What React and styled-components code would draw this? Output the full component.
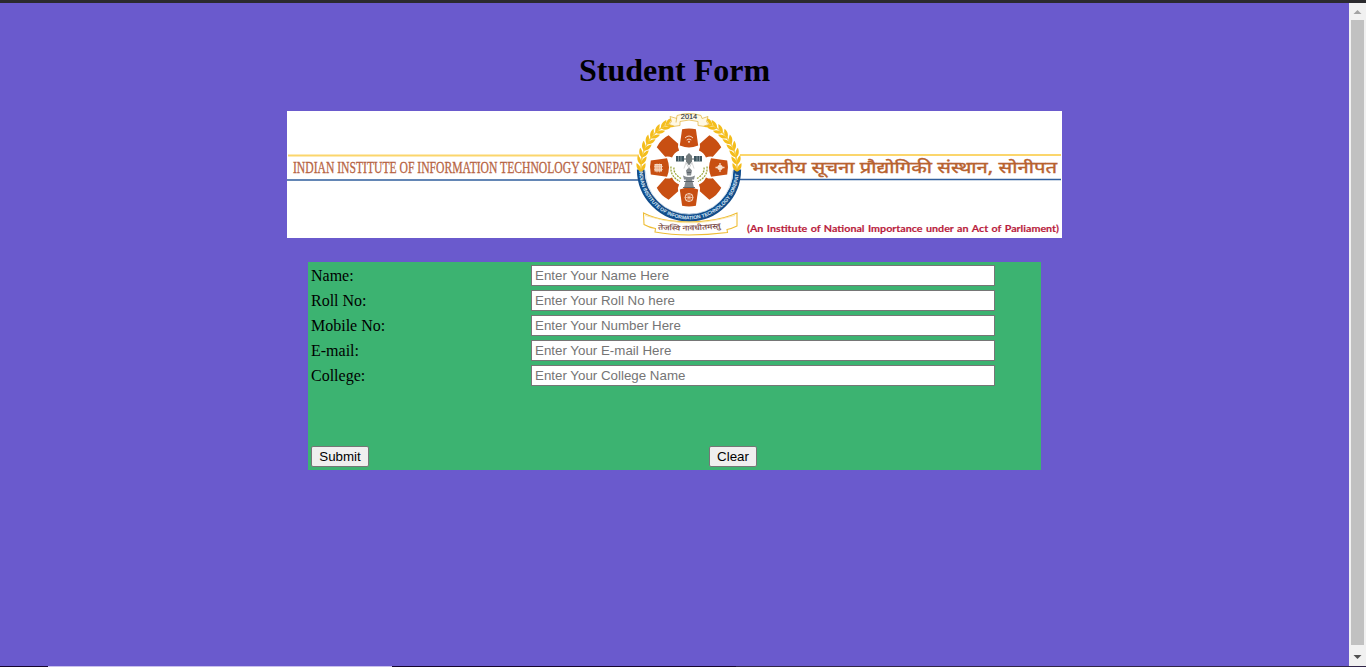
import React from "react";
import styled, { createGlobalStyle } from "styled-components";

const GlobalStyle = createGlobalStyle`
  body { margin: 0; overflow: hidden; }
  * { box-sizing: border-box; }
`;

const Screen = styled.div`
  height: 667px;
  display: flex;
  flex-direction: column;
  background: #6a5acd;
  font-family: "Liberation Serif", "Times New Roman", serif;
  color: #000;
`;

const TopEdge = styled.div`
  height: 3px;
  flex: none;
  background: #2b2a2e;
`;

const Viewport = styled.div`
  flex: 1;
  min-height: 0;
  display: flex;
`;

const Page = styled.main`
  flex: 1;
  display: flex;
  flex-direction: column;
  align-items: center;
  padding-top: 49px;
`;

const Title = styled.h1`
  margin: 0 0 22px;
  font-size: 32px;
  line-height: 37px;
  font-weight: bold;
`;

const Banner = styled.svg`
  display: block;
  width: 775px;
  height: 127px;
  margin-bottom: 24px;
  background: #fff;
`;

const Form = styled.form`
  width: 733px;
  height: 208px;
  padding: 3px;
  background: #3cb371;
`;

const Field = styled.label`
  display: grid;
  grid-template-columns: 220px 464px;
  height: 21px;
  margin-bottom: 4px;
  font-size: 16px;
  line-height: 21px;
`;

const Input = styled.input`
  height: 21px;
  padding: 1px 3px;
  border: 1px solid #767676;
  background: #fff;
  font: 13.333px "Liberation Sans", Arial, sans-serif;
  &::placeholder { color: #757575; }
`;

const Actions = styled.div`
  display: grid;
  grid-template-columns: 398px auto;
  justify-items: start;
  margin-top: 60px;
`;

const Button = styled.button`
  width: ${(p) => p.$width}px;
  height: 21px;
  padding: 0;
  border: 1px solid #767676;
  border-radius: 2px;
  background: #efefef;
  color: #000;
  font: 13.333px "Liberation Sans", Arial, sans-serif;
`;

const Scrollbar = styled.div`
  width: 17px;
  display: flex;
  flex-direction: column;
  align-items: center;
  background: #f1f1f1;
`;

const ScrollArrow = styled.svg`
  width: 17px;
  height: 17px;
  flex: none;
  &:last-child { margin-top: auto; }
`;

const Thumb = styled.div`
  width: 13px;
  height: 625px;
  background: #c1c1c1;
`;

const BottomEdge = styled.div`
  height: 1px;
  flex: none;
  display: grid;
  grid-template-columns: 48px 344px 344px 1fr;
  background: #16062f;
`;

const EdgeSegment = styled.span`
  background: ${(p) => p.$color};
`;

const FIELDS = [
  ["Name:", "Enter Your Name Here"],
  ["Roll No:", "Enter Your Roll No here"],
  ["Mobile No:", "Enter Your Number Here"],
  ["E-mail:", "Enter Your E-mail Here"],
  ["College:", "Enter Your College Name"],
];

const LEAVES = [0, 8.5, 17, 25.5, 34, 42.5, 51, 59.5, 66];

function Laurel({ flip }) {
  return (
    <g transform={flip ? "scale(-1 1)" : undefined} fill="#f4bd1c">
      <path d="M-48 2A48 48 0 0 1-20-44" fill="none" stroke="#f7cf50" strokeWidth="1.6" />
      {LEAVES.map((a) => (
        <g key={a} transform={`rotate(${a}) translate(-48 0)`}>
          <path d="M0 4.2C-4 2.5-5-1.5-4.4-4.6C-1.8-2.8 0-.8 0 4.2Z" />
          <path d="M0 4.2C4 2.5 5-1.5 4.4-4.6C1.8-2.8 0-.8 0 4.2Z" />
        </g>
      ))}
    </g>
  );
}

function Emblem() {
  return (
    <g transform="translate(402 56.5)">
      <circle r="45" fill="#fff" />
      <path d="M-48.3 2A48.3 48.3 0 0 0 48.3 2" fill="none" stroke="#124d8b" strokeWidth="7.6" />
      <path d="M-43.7 3A43.7 43.7 0 0 0 43.7 3" fill="none" stroke="#cadbe9" strokeWidth=".8" />
      <path id="ring" d="M-49.9 2A49.9 49.9 0 0 0 49.9 2" fill="none" />
      <text fill="#d9e9f7" fontFamily="Liberation Sans, sans-serif" fontWeight="bold" fontSize="5.1">
        <textPath href="#ring" startOffset="1" textLength="151" lengthAdjust="spacing">
          INDIAN INSTITUTE OF INFORMATION TECHNOLOGY SONEPAT
        </textPath>
      </text>
      <Laurel />
      <Laurel flip />

      {[0, 45, 90, 135, 180, 225, 270, 315].map((a) => (
        <path
          key={a}
          transform={`rotate(${a})`}
          d={
            a % 90
              ? "M-8.4-37.2Q0-40 8.4-37.2L9.2-24.5Q6-22.5 5-19Q0-21-5-19Q-6-22.5-9.2-24.5Z"
              : "M-6.9-38.2Q0-39.8 6.9-38.2L9.2-22Q4-20 0-20T-9.2-22Z"
          }
          fill="#c84f12"
        />
      ))}

      <g fill="none" stroke="#f6d8c3" strokeWidth="1">
        <path d="M-4-29.5Q0-33.5 4-29.5M-2.3-27.5Q0-29.5 2.3-27.5" />
        <circle cy="-25.7" r=".6" fill="#f6d8c3" />
        <rect x="-34" y="-3" width="6.5" height="6.5" fill="#edb28f" />
        <path d="M-32-4v9M-29.5-4v9M-35-1h9M-35 2h9" strokeWidth=".6" />
        <circle cx="31" r="2.3" fill="#fff" />
        <path d="M31-4.5v9M26.5 0h9" strokeWidth="1.3" />
        <circle cy="30" r="4" />
        <path d="M-3 27L3 33M3 27L-3 33M-4 30h8M0 26v8" strokeWidth=".7" />
      </g>

      <g fill="none" stroke="#9ba63c" strokeWidth="1.3" strokeDasharray="2 1">
        <path d="M-18-1Q-19 9-9 14M-15 0Q-16 6-8 11" />
        <path d="M18-1Q19 9 9 14M15 0Q16 6 8 11" />
      </g>
      <path d="M-13-8.5H13" stroke="#536066" />
      <path d="M-13-11.5h8v5.5h-8ZM5-11.5h8v5.5h-8Z" fill="#3e5660" />
      <path d="M-10.5-11.5v5.5M-8-11.5v5.5M8-11.5v5.5M10.5-11.5v5.5" stroke="#b5c3c7" strokeWidth=".6" />
      <path d="M-3-11.5L0-14.5L3-11.5V-6L0-2L-3-6Z" fill="#737b7d" />
      <path d="M-3-5L-5 1M3-5L5 1M-3-5L0 1L3-5" fill="none" stroke="#bbb" strokeWidth=".6" />
      <path d="M-3 3Q0-2 3 3L2 8H-2ZM-6 8Q0 11 6 8L5 12H3L5 20H-5L-3 12H-5Z" fill="#858b8f" />
      <path d="M-5 14H5M-6 20H6M-2 5H2" stroke="#535d64" strokeWidth=".9" />

      <path
        d="M-13-45L-12-52Q0-56 12-52L13-49L19-51L17.5-46L20-43Q14-40 9-42L9-46Q0-49-9-46V-42Q-14-40-20-43L-17.5-46L-19-51L-12-49"
        fill="#fff9e5"
        stroke="#e5b94b"
        strokeWidth=".8"
      />
      <text y="-48.3" textAnchor="middle" fontFamily="Liberation Sans, sans-serif" fontSize="7.4" fill="#20283a" stroke="#20283a" strokeWidth=".1">
        2014
      </text>

      <path
        d="M-45.5 45.5Q-35 51-20 53Q0 56 20 53Q36 51 48 45.5V58.5Q43 61 38 62L38.5 65Q18 67.5 0 67.5T-34 64.5L-33.5 61Q-40 60-45 57Z"
        fill="#fff"
        stroke="#eebd35"
        strokeWidth="1.1"
      />
      <path d="M-44 48Q-25 54-8 55Q15 57 46 48" fill="none" stroke="#fae29a" strokeWidth=".8" />
      <path id="motto" d="M-32 62Q0 64.5 33 60.5" fill="none" />
      <text fill="#744039" stroke="#744039" strokeWidth=".1" fontFamily="Noto Sans, Noto Sans Devanagari, sans-serif" fontSize="7.3">
        <textPath href="#motto" startOffset="1" textLength="63" lengthAdjust="spacingAndGlyphs">
          तेजस्वि नावधीतमस्तु
        </textPath>
      </text>
    </g>
  );
}

function InstituteBanner() {
  return (
    <Banner viewBox="0 0 775 127" role="img" aria-label="Indian Institute of Information Technology Sonepat">
      <path d="M1 44.5H352M453 44H774" stroke="#fbd66c" strokeWidth="2.2" />
      <path d="M0 69H351M453 68.5H774" stroke="#315f9d" strokeWidth="1.7" />
      <text x="6" y="62" textLength="339" lengthAdjust="spacingAndGlyphs" fontFamily="Liberation Serif, serif" fontSize="16.5" fill="#b76443" stroke="#b76443" strokeWidth=".3">
        INDIAN INSTITUTE OF INFORMATION TECHNOLOGY SONEPAT
      </text>
      <text x="463" y="62" textLength="307" lengthAdjust="spacingAndGlyphs" fontFamily="Noto Sans, Noto Sans Devanagari, sans-serif" fontSize="16.5" fill="#b8622f" stroke="#b8622f" strokeWidth=".4">
        भारतीय सूचना प्रौद्योगिकी संस्थान, सोनीपत
      </text>
      <text x="460" y="121" textLength="312" lengthAdjust="spacingAndGlyphs" fontFamily="Lato, sans-serif" fontWeight="bold" fontSize="10" wordSpacing=".8" fill="#b91d3d" stroke="#b91d3d" strokeWidth=".15">
        (An Institute of National Importance under an Act of Parliament)
      </text>
      <Emblem />
    </Banner>
  );
}

export default function App() {
  return (
    <>
      <GlobalStyle />
      <Screen>
        <TopEdge />
        <Viewport>
          <Page>
            <Title>Student Form</Title>
            <InstituteBanner />
            <Form onSubmit={(e) => e.preventDefault()}>
              {FIELDS.map(([label, placeholder]) => (
                <Field key={label}>
                  {label}
                  <Input placeholder={placeholder} />
                </Field>
              ))}
              <Actions>
                <Button $width={58}>Submit</Button>
                <Button $width={48} type="reset">Clear</Button>
              </Actions>
            </Form>
          </Page>
          <Scrollbar>
            <ScrollArrow viewBox="0 0 17 17"><path d="M4.5 11L8.5 7L12.5 11Z" fill="#a3a3a3" /></ScrollArrow>
            <Thumb />
            <ScrollArrow viewBox="0 0 17 17"><path d="M4.5 6L8.5 10L12.5 6Z" fill="#505050" /></ScrollArrow>
          </Scrollbar>
        </Viewport>
        <BottomEdge>
          <EdgeSegment $color="#16062f" />
          <EdgeSegment $color="#c9c0ed" />
          <EdgeSegment $color="#16062f" />
          <EdgeSegment $color="#302547" />
        </BottomEdge>
      </Screen>
    </>
  );
}
